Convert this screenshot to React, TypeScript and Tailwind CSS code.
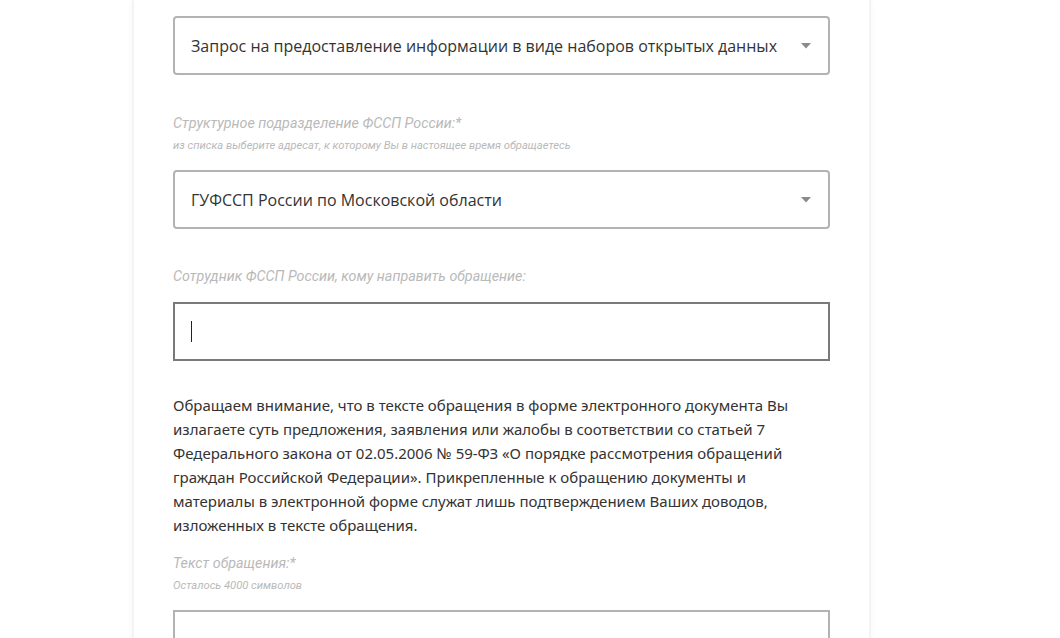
import React from 'react'

const labelFont = { fontFamily: '"Roboto", "Noto Sans", sans-serif' }

function Caret() {
  return (
    <svg width="10" height="6" viewBox="0 0 10 6" className="shrink-0">
      <path d="M0 0h10L5 5.5z" fill="#8a8a8a" />
    </svg>
  )
}

function SelectBox({ value }: { value: string }) {
  return (
    <div className="flex h-[59px] items-center justify-between rounded-[4px] border-2 border-[#b3b3b3] bg-white pl-[16px] pr-[17px]">
      <span className="text-[16px] text-[#333]" style={{ fontFamily: '"Open Sans", sans-serif' }}>
        {value}
      </span>
      <Caret />
    </div>
  )
}

function Label({ title, hint }: { title: string; hint?: string }) {
  return (
    <div className="flex flex-col italic text-[#b9b9b9]" style={labelFont}>
      <span className="text-[14.3px] leading-[18px]">{title}</span>
      {hint && <span className="mt-[7px] text-[11.2px] leading-[14px]">{hint}</span>}
    </div>
  )
}

export default function App() {
  return (
    <div className="h-[638px] overflow-hidden bg-white">
      <div className="ml-[132px] w-[739px] border-x-2 border-[#f4f4f4] bg-white px-[39px] pt-[16px] shadow-[0_0_6px_rgba(0,0,0,0.04)]">
        <SelectBox value="Запрос на предоставление информации в виде наборов открытых данных" />

        <div className="mt-[39px]">
          <Label
            title="Структурное подразделение ФССП России:*"
            hint="из списка выберите адресат, к которому Вы в настоящее время обращаетесь"
          />
        </div>
        <div className="mt-[17px]">
          <SelectBox value="ГУФССП России по Московской области" />
        </div>

        <div className="mt-[38px]">
          <Label title="Сотрудник ФССП России, кому направить обращение:" />
        </div>
        <div className="mt-[17px] flex h-[59px] items-center border-2 border-[#7a7a7a] bg-white pl-[16px]">
          <span className="h-[21px] w-px bg-[#222]" />
        </div>

        <p
          className="mt-[32px] text-[15px] leading-[24px] text-[#333]"
          style={{ fontFamily: '"Noto Sans", sans-serif' }}
        >
          Обращаем внимание, что в тексте обращения в форме электронного документа Вы
          <br />
          излагаете суть предложения, заявления или жалобы в соответствии со статьей 7
          <br />
          Федерального закона от 02.05.2006 № 59-ФЗ «О порядке рассмотрения обращений
          <br />
          граждан Российской Федерации». Прикрепленные к обращению документы и
          <br />
          материалы в электронной форме служат лишь подтверждением Ваших доводов,
          <br />
          изложенных в тексте обращения.
        </p>

        <div className="mt-[17px]">
          <Label title="Текст обращения:*" hint="Осталось 4000 символов" />
        </div>
        <div className="mt-[17px] h-[80px] border-2 border-[#b3b3b3] bg-white" />
      </div>
    </div>
  )
}
